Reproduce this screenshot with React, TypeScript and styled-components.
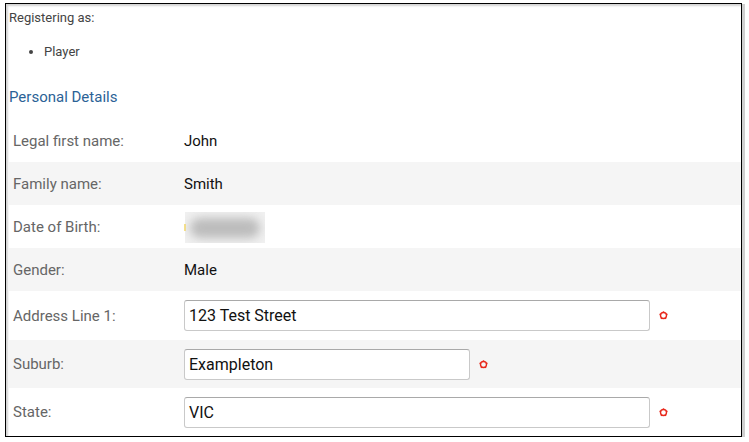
import React from "react";
import styled, { createGlobalStyle } from "styled-components";

const Global = createGlobalStyle`
  html, body { margin: 0; padding: 0; background: #ffffff; }
  body { font-family: Roboto, "Liberation Sans", sans-serif; }
`;

const Frame = styled.div`
  box-sizing: border-box;
  margin: 3px 0 0 5px;
  width: 737px;
  height: 434px;
  border: 1px solid #000;
  box-shadow: 2px 2px 0 1px #cfcfcf;
  overflow: hidden;
  background: #fff;
`;

const Inner = styled.div`
  height: 100%;
  box-shadow: inset 2px 2px 2px #d4d4d4;
  padding: 6px 0 0 3px;
  box-sizing: border-box;
`;

const Intro = styled.div`
  font-size: 13px;
  color: #444;
  line-height: 16px;
`;

const RoleList = styled.ul`
  margin: 18px 0 0 0;
  padding-left: 35px;
  font-size: 13px;
  line-height: 16px;
  color: #444;
`;

const SectionTitle = styled.h3`
  margin: 28px 0 0 0;
  font-size: 15px;
  line-height: 18px;
  font-weight: 400;
  color: #2b6296;
`;

const Table = styled.div`
  margin-top: 13px;
  display: flex;
  flex-direction: column;
`;

const Row = styled.div<{ $alt?: boolean; $h: number }>`
  display: grid;
  grid-template-columns: 175px 1fr;
  align-items: center;
  height: ${(p) => p.$h}px;
  background: ${(p) => (p.$alt ? "#f5f5f5" : "#fff")};
`;

const Label = styled.div`
  padding-left: 4px;
  font-size: 15px;
  color: #666;
`;

const Value = styled.div`
  font-size: 15px;
  color: #111;
  display: flex;
  align-items: center;
`;

const Input = styled.div<{ $w: number }>`
  box-sizing: border-box;
  width: ${(p) => p.$w}px;
  height: 31px;
  border: 1px solid #c9c9c9;
  border-top-color: #a9a9a9;
  border-radius: 3px;
  background: #fff;
  padding: 0 4px;
  display: flex;
  align-items: center;
  font-size: 16px;
  color: #111;
`;

const Required = styled.span`
  display: inline-flex;
  margin-left: 9px;
`;

const Redacted = styled.div`
  position: relative;
  display: flex;
  align-items: center;
  margin-top: 2px;
  &::before {
    content: "";
    position: absolute;
    left: 0;
    top: 12px;
    width: 2px;
    height: 7px;
    background: #f5e08a;
  }
`;

const BlurBox = styled.div`
  width: 80px;
  height: 31px;
  margin-left: 1px;
  background: #f0f0f0;
  overflow: hidden;
  display: flex;
  align-items: center;
  justify-content: center;
`;

const BlurBlob = styled.div`
  width: 70px;
  height: 20px;
  background: #bcbcbc;
  border-radius: 10px;
  filter: blur(5px);
`;

const ReqIcon = () => (
  <Required>
    <svg width="9" height="9" viewBox="0 0 9 9">
      <circle cx="4.5" cy="4.5" r="3" fill="none" stroke="#e8291c" strokeWidth="1.4" />
      {[0, 72, 144, 216, 288].map((a) => (
        <circle
          key={a}
          cx={4.5 + 3.5 * Math.sin((a * Math.PI) / 180)}
          cy={4.5 - 3.5 * Math.cos((a * Math.PI) / 180)}
          r="0.8"
          fill="#e8291c"
        />
      ))}
    </svg>
  </Required>
);

export default function App() {
  return (
    <>
      <Global />
      <Frame>
        <Inner>
          <Intro>Registering as:</Intro>
          <RoleList>
            <li>Player</li>
          </RoleList>
          <SectionTitle>Personal Details</SectionTitle>
          <Table>
            <Row $h={43}>
              <Label>Legal first name:</Label>
              <Value>John</Value>
            </Row>
            <Row $h={43} $alt>
              <Label>Family name:</Label>
              <Value>Smith</Value>
            </Row>
            <Row $h={43}>
              <Label>Date of Birth:</Label>
              <Value>
                <Redacted>
                  <BlurBox>
                    <BlurBlob />
                  </BlurBox>
                </Redacted>
              </Value>
            </Row>
            <Row $h={43} $alt>
              <Label>Gender:</Label>
              <Value>Male</Value>
            </Row>
            <Row $h={49}>
              <Label>Address Line 1:</Label>
              <Value>
                <Input $w={466}>123 Test Street</Input>
                <ReqIcon />
              </Value>
            </Row>
            <Row $h={48} $alt>
              <Label>Suburb:</Label>
              <Value>
                <Input $w={286}>Exampleton</Input>
                <ReqIcon />
              </Value>
            </Row>
            <Row $h={48}>
              <Label>State:</Label>
              <Value>
                <Input $w={466}>VIC</Input>
                <ReqIcon />
              </Value>
            </Row>
          </Table>
        </Inner>
      </Frame>
    </>
  );
}
